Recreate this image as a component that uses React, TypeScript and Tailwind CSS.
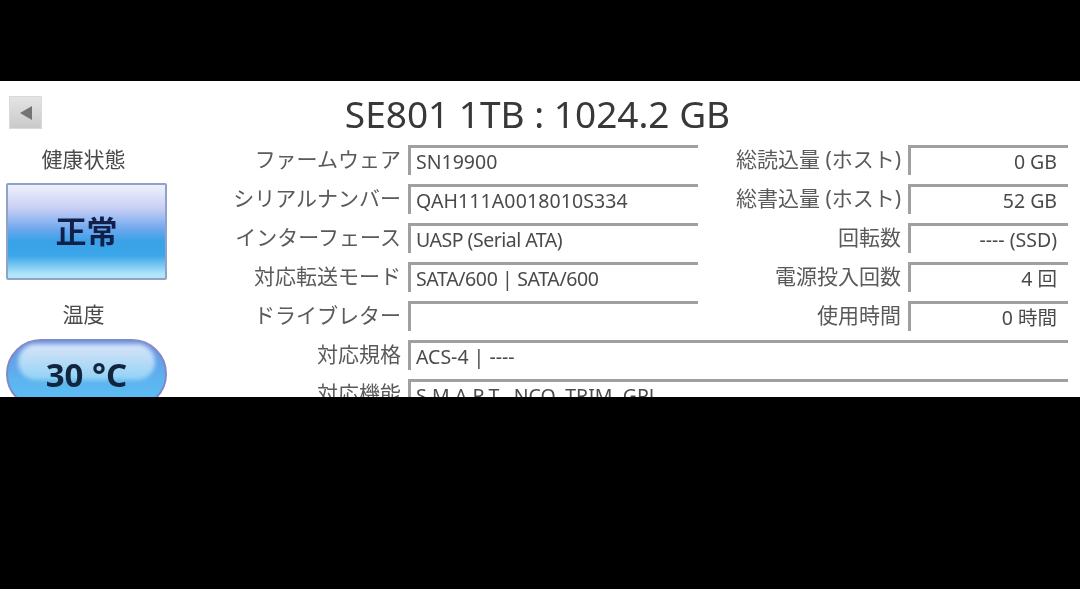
import React from "react";

const font = "[font-family:'Noto_Sans','Noto_Sans_CJK_JP',sans-serif]";

function Field({ children, right = false, className = "" }: { children?: React.ReactNode; right?: boolean; className?: string }) {
  return (
    <div className={`h-[30px] border-t-[3px] border-l-[3px] border-[#a0a0a0] flex items-center text-[19.5px] text-[#4a4a4a] whitespace-nowrap ${right ? "justify-end pr-[11px]" : "pl-[5px]"} ${className}`}>
      {children}
    </div>
  );
}

function Label({ children }: { children: React.ReactNode }) {
  return <div className="h-[30px] flex items-center justify-end text-[21px] text-[#5a5a5a] whitespace-nowrap">{children}</div>;
}

const rows: [string, string, string, string, string][] = [
  ["ファームウェア", "SN19900", "総読込量 (ホスト)", "0 GB", ""],
  ["シリアルナンバー", "QAH111A0018010S334", "総書込量 (ホスト)", "52 GB", "tracking-[0.1px]"],
  ["インターフェース", "UASP (Serial ATA)", "回転数", "---- (SSD)", "tracking-[-0.5px]"],
  ["対応転送モード", "SATA/600 | SATA/600", "電源投入回数", "4 回", "tracking-[-0.38px]"],
  ["ドライブレター", "", "使用時間", "0 時間", ""],
];

export default function App() {
  return (
    <div className={`w-[1080px] h-[589px] bg-black overflow-hidden pt-[81px] ${font}`}>
      <div className="h-[316px] bg-white overflow-hidden">
        <div className="blur-[0.4px]">
          <div className="flex h-[64px]">
            <div className="w-[42px] pl-[9px] pt-[15px]">
              <div className="w-[33px] h-[33px] bg-gradient-to-b from-[#e4e4e4] to-[#cacaca] border border-[#dadada] flex items-center justify-center">
                <svg width="18" height="18" viewBox="0 0 18 18"><path d="M15 2 L15 16 L3 9 Z" fill="#747474" /></svg>
              </div>
            </div>
            <div className="flex-1 pt-[10px] pr-[47px] text-center text-[37px] leading-[46px] text-[#383838] whitespace-nowrap">SE801 1TB : 1024.2 GB</div>
          </div>
          <div className="flex">
            <div className="w-[174px] pl-[6px] shrink-0">
              <div className="-mt-[1px] w-[155px] text-center text-[21px] leading-[30px] text-[#4a4a4a]">健康状態</div>
              <div className="mt-[9px] w-[161px] h-[97px] rounded-[2px] border-2 border-[#8fa3c8] flex items-center justify-center text-[31px] font-bold text-[#10204a] bg-[linear-gradient(180deg,#f0f0fc_0%,#c8cff5_25%,#70a8ee_47%,#3aa2e8_60%,#3ca6ea_76%,#b2e5fa_96%)]">正常</div>
              <div className="mt-[19px] w-[155px] text-center text-[21px] leading-[30px] text-[#4a4a4a]">温度</div>
              <div className="relative mt-[10px] w-[161px] h-[70px] rounded-[35px] border-2 border-[#8088c4] flex items-start justify-center pt-[14px] text-[33px] leading-[40px] font-bold text-[#12253f] bg-[linear-gradient(180deg,#6b92e2_0%,#5cb4f0_60%,#5cc0f4_100%)]">
                <div className="absolute left-[10px] right-[10px] top-[3px] h-[36px] rounded-[18px] blur-[2px] bg-gradient-to-b from-[#d8e4f8] to-[#90d2f5]" />
                <span className="relative">30 °C</span>
              </div>
            </div>
            <div className="w-[894px] grid grid-cols-[227px_294px_206px_1fr] gap-y-[9px]">
              {rows.map(([a, b, c, d, t]) => (
                <React.Fragment key={a}>
                  <Label>{a}</Label>
                  <Field className={`ml-[7px] w-[290px] ${t}`}>{b}</Field>
                  <Label>{c}</Label>
                  <Field right className="ml-[7px]">{d}</Field>
                </React.Fragment>
              ))}
              <Label>対応規格</Label>
              <Field className="col-span-3 ml-[7px]">ACS-4 | ----</Field>
              <Label>対応機能</Label>
              <Field className="col-span-3 ml-[7px]">S.M.A.R.T., NCQ, TRIM, GPL</Field>
            </div>
          </div>
        </div>
      </div>
    </div>
  );
}
